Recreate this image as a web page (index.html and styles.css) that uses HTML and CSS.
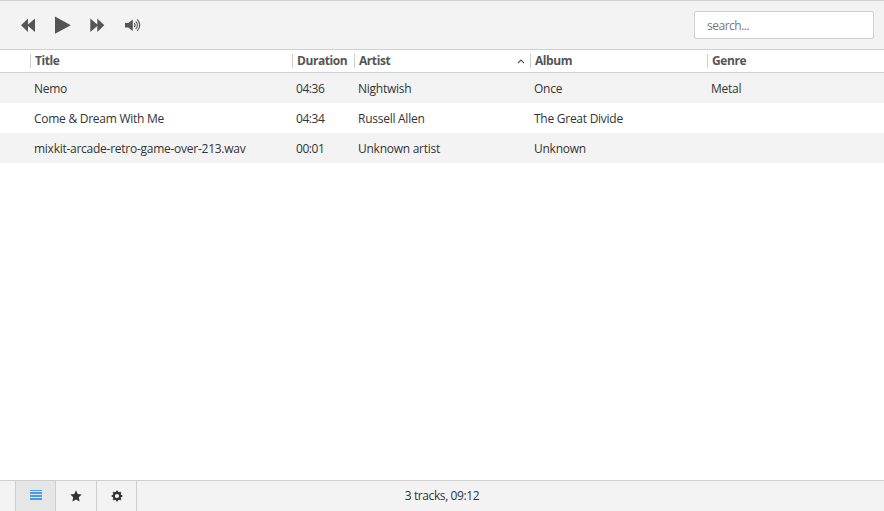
FILE: index.html
```html
<!DOCTYPE html>
<html lang="en">
<head>
<meta charset="utf-8">
<title>Music library</title>
<link rel="stylesheet" href="styles.css">
</head>
<body>
<div class="app">
  <header class="toolbar">
    <div class="controls">
      <svg class="icon" width="130" height="24" viewBox="0 0 130 24" fill="currentColor">
        <path d="M6 12.200 13 5.500v6l7-6v13.400l-7-6v6z"/>
        <path d="M40 3.500 55.800 12.200 40 20.800z"/>
        <path d="M75.300 5.500l7 6v-6l7 6.700-7 6.700v-6l-7 6z"/>
        <path d="M110 10h3.200l4.600-3.500v11.400l-4.600-3.500H110z"/>
        <path d="M119.200 10.200q2 2 0 4M120.700 8.300q3.600 3.900 0 7.800M122.200 6.400q5.200 5.800 0 11.600" fill="none" stroke="currentColor" stroke-width="1.100"/>
      </svg>
    </div>
    <input class="search" type="text" placeholder="search...">
  </header>
  <main class="library">
    <div class="head">
      <span></span>
      <span class="col">Title</span>
      <span class="col">Duration</span>
      <span class="col sorted">Artist<svg width="8" height="6" viewBox="0 0 8 6"><path d="M1 5 4 2l3 3" fill="none" stroke="#555" stroke-width="1.100"/></svg></span>
      <span class="col">Album</span>
      <span class="col">Genre</span>
    </div>
    <div class="row"><span></span><span>Nemo</span><span class="time">04:36</span><span>Nightwish</span><span>Once</span><span>Metal</span></div>
    <div class="row"><span></span><span>Come &amp; Dream With Me</span><span class="time">04:34</span><span>Russell Allen</span><span>The Great Divide</span><span></span></div>
    <div class="row"><span></span><span>mixkit-arcade-retro-game-over-213.wav</span><span class="time">00:01</span><span>Unknown artist</span><span>Unknown</span><span></span></div>
  </main>
  <footer class="footer">
    <nav class="tabs">
      <a class="tab active"><svg width="12" height="12" viewBox="0 0 12 12"><path d="M0 0h12v1H0zM0 2h12v2H0zM0 5h12v2H0zM0 8h12v2H0z" fill="#4a98e8"/></svg></a>
      <a class="tab wide"><svg width="12" height="12" viewBox="0 0 12 12"><path d="M6 .3l1.700 3.700 4 .5-2.900 2.800.8 4.200L6 9.500l-3.600 2 .8-4.200L.3 4.500l4-.5z" fill="#333"/></svg></a>
      <a class="tab"><svg width="12" height="12" viewBox="0 0 12 12"><circle cx="6" cy="6" r="3.150" fill="none" stroke="#333" stroke-width="2.100"/><path d="M6 .7v2M6 9.300v2M.7 6h2M9.300 6h2M2.200 2.200l1.400 1.400M8.400 8.400l1.400 1.400M2.200 9.800l1.400-1.400M8.400 3.600l1.400-1.400" stroke="#333" stroke-width="2"/></svg></a>
    </nav>
    <div class="status">3 tracks, 09:12</div>
    <div></div>
  </footer>
</div>
</body>
</html>
```
FILE: styles.css
```css
* { box-sizing: border-box; }
body {
  margin: 0;
  font: 12px/18px "Segoe UI", "Open Sans", "Noto Sans", sans-serif;
  letter-spacing: -0.26px;
  color: #333;
  background: #fff;
}
.app { height: 511px; display: flex; flex-direction: column; overflow: hidden; }
.toolbar {
  height: 50px;
  flex: none;
  display: flex;
  align-items: center;
  justify-content: space-between;
  padding: 0 10px 0 15px;
  background: #f3f3f3;
  border-top: 1px solid #cfcfcf;
  border-bottom: 1px solid #cfcfcf;
}
.controls { display: flex; color: #555; }
.icon { display: block; }
.search {
  width: 180px;
  height: 28px;
  padding: 0 12px;
  border: 1px solid #cfcfcf;
  border-radius: 2px;
  background: #fff;
  font: inherit;
  letter-spacing: -0.5px;
}
.search::placeholder { color: #777; }
.library { flex: 1; }
.head, .row {
  display: grid;
  grid-template-columns: 30px 262px 62px 176px 177px 1fr;
  align-items: center;
  white-space: nowrap;
}
.head {
  height: 23px;
  border-bottom: 1px solid #cfcfcf;
  font-weight: 700;
  letter-spacing: -0.43px;
  color: #555;
}
.col {
  height: 14px;
  line-height: 14px;
  padding-left: 4px;
  border-left: 1px solid #cfcfcf;
}
.sorted {
  display: flex;
  align-items: center;
  justify-content: space-between;
  padding-right: 5px;
}
.row { height: 30px; padding-top: 2px; }
.row:nth-child(even) { background: #f3f3f3; }
.row span { padding-left: 4px; }
.row .time { letter-spacing: -0.45px; }
.footer {
  height: 31px;
  flex: none;
  display: grid;
  grid-template-columns: 1fr 1fr 1fr;
  background: #f3f3f3;
  border-top: 1px solid #cfcfcf;
}
.tabs { display: flex; margin-left: 15px; }
.tab {
  width: 40px;
  display: flex;
  align-items: center;
  justify-content: center;
  border-right: 1px solid #cfcfcf;
}
.tab.wide { width: 41px; }
.tab.active { width: 41px; background: #e6e6e6; border-left: 1px solid #cfcfcf; }
.status { text-align: center; line-height: 30px; letter-spacing: -0.4px; }
```
